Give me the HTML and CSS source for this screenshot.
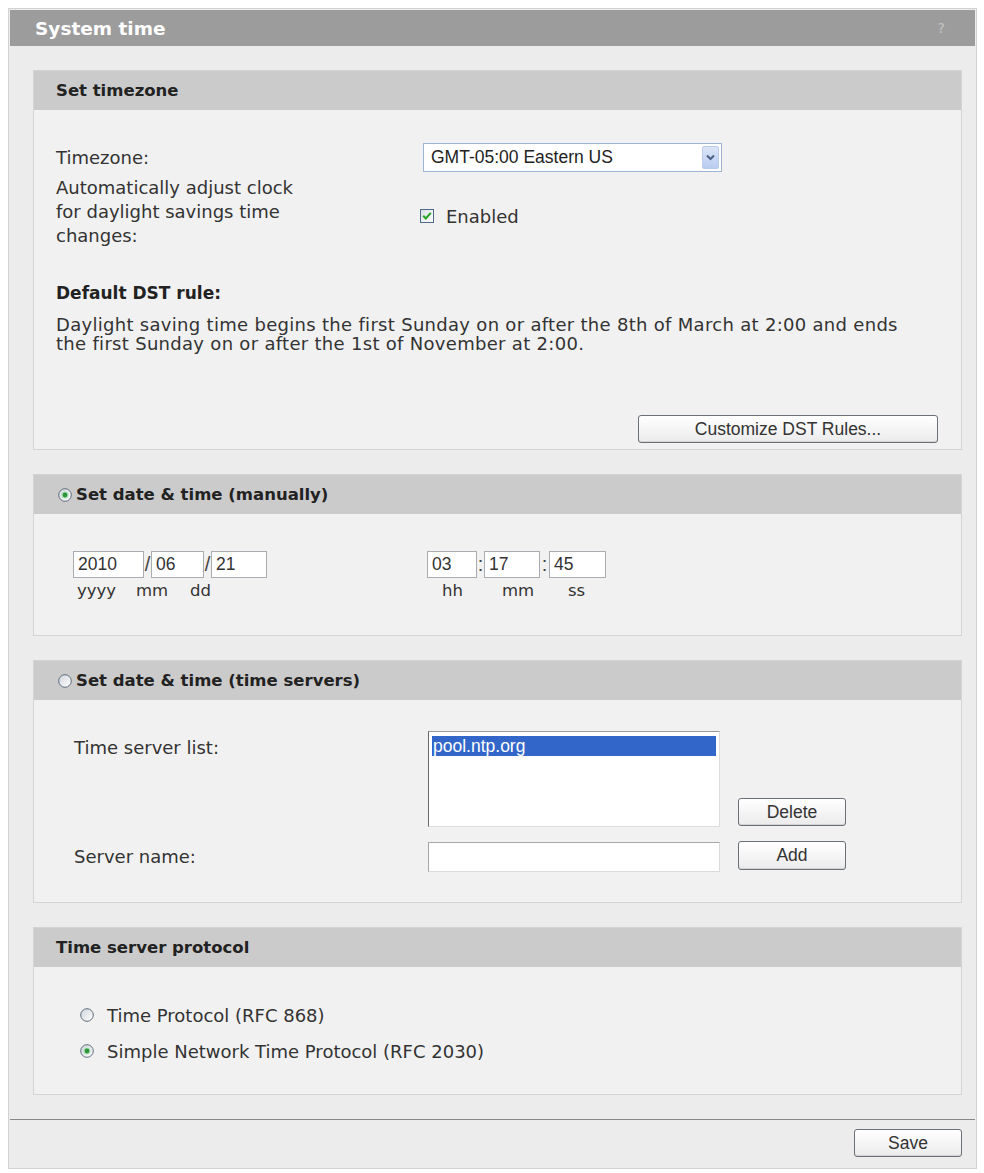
FILE: index.html
```html
<!DOCTYPE html>
<html>
<head>
<meta charset="utf-8">
<title>System time</title>
<link rel="stylesheet" href="styles.css">
</head>
<body>
<div class="panel">
  <div class="titlebar"><span class="title">System time</span><span class="help">?</span></div>
  <div class="content">

    <section class="sec">
      <div class="sec-head">Set timezone</div>
      <div class="sec-body tz-body">
        <div class="row">
          <div class="lbl">Timezone:</div>
          <div class="select">
            <span class="select-text">GMT-05:00 Eastern US</span>
            <span class="select-arrow"><svg width="9" height="7" viewBox="0 0 9 7"><polyline points="1,1.5 4.5,5 8,1.5" fill="none" stroke="#4d6185" stroke-width="2"/></svg></span>
          </div>
        </div>
        <div class="row row-dst">
          <div class="lbl">Automatically adjust clock<br>for daylight savings time<br>changes:</div>
          <div class="check">
            <svg class="checkbox" width="14" height="14" viewBox="0 0 14 14">
              <defs><linearGradient id="cbg" x1="0" y1="0" x2="1" y2="1"><stop offset="0" stop-color="#d9dee4"/><stop offset="1" stop-color="#ffffff"/></linearGradient></defs>
              <rect x="0.5" y="0.5" width="13" height="13" fill="url(#cbg)" stroke="#4f6a88"/>
              <polyline points="3.2,6.8 5.8,9.5 10.8,3.8" fill="none" stroke="#22a322" stroke-width="2"/>
            </svg>
            <span>Enabled</span>
          </div>
        </div>
        <div class="rule-title">Default DST rule:</div>
        <p class="rule-text">Daylight saving time begins the first Sunday on or after the 8th of March at 2:00 and ends<br>the first Sunday on or after the 1st of November at 2:00.</p>
        <div class="btn-row"><button class="btn btn-wide">Customize DST Rules...</button></div>
      </div>
    </section>

    <section class="sec">
      <div class="sec-head">
        <svg class="radio head-radio" width="14" height="14" viewBox="0 0 14 14">
          <defs><linearGradient id="rg1" x1="0" y1="0" x2="1" y2="1"><stop offset="0" stop-color="#cfd5dc"/><stop offset="1" stop-color="#ffffff"/></linearGradient></defs>
          <circle cx="7" cy="7" r="6.3" fill="url(#rg1)" stroke="#5f6d7b"/>
          <circle cx="7" cy="7" r="3.6" fill="#b3e0b9"/>
          <circle cx="7" cy="7" r="2.4" fill="#2c963b"/>
        </svg>
        <span>Set date &amp; time (manually)</span>
      </div>
      <div class="sec-body dt-body">
        <div class="dgroup">
          <div class="fields">
            <span class="f w71">2010</span><span class="sep">/</span><span class="f w53">06</span><span class="sep">/</span><span class="f w56">21</span>
          </div>
          <div class="labs">
            <span class="l-yyyy">yyyy</span><span class="l-mm">mm</span><span>dd</span>
          </div>
        </div>
        <div class="tgroup">
          <div class="fields">
            <span class="f w50">03</span><span class="sep">:</span><span class="f w56">17</span><span class="sep sep-s">:</span><span class="f w57">45</span>
          </div>
          <div class="labs">
            <span class="l-hh">hh</span><span class="l-tmm">mm</span><span>ss</span>
          </div>
        </div>
      </div>
    </section>

    <section class="sec">
      <div class="sec-head">
        <svg class="radio head-radio" width="14" height="14" viewBox="0 0 14 14">
          <defs><linearGradient id="rg2" x1="0" y1="0" x2="1" y2="1"><stop offset="0" stop-color="#cfd5dc"/><stop offset="1" stop-color="#ffffff"/></linearGradient></defs>
          <circle cx="7" cy="7" r="6.3" fill="url(#rg2)" stroke="#5f6d7b"/>
        </svg>
        <span>Set date &amp; time (time servers)</span>
      </div>
      <div class="sec-body ts-body">
        <div class="ts-row">
          <div class="ts-lbl ts-lbl-top">Time server list:</div>
          <div class="listbox"><div class="opt-sel">pool.ntp.org</div></div>
          <button class="btn btn-sm btn-del">Delete</button>
        </div>
        <div class="ts-row ts-row2">
          <div class="ts-lbl">Server name:</div>
          <span class="f textbox"></span>
          <button class="btn btn-sm btn-add">Add</button>
        </div>
      </div>
    </section>

    <section class="sec">
      <div class="sec-head">Time server protocol</div>
      <div class="sec-body proto-body">
        <div class="opt">
          <svg class="radio" width="14" height="14" viewBox="0 0 14 14">
            <defs><linearGradient id="rg3" x1="0" y1="0" x2="1" y2="1"><stop offset="0" stop-color="#cfd5dc"/><stop offset="1" stop-color="#ffffff"/></linearGradient></defs>
            <circle cx="7" cy="7" r="6.3" fill="url(#rg3)" stroke="#5f6d7b"/>
          </svg>
          <span>Time Protocol (RFC 868)</span>
        </div>
        <div class="opt">
          <svg class="radio" width="14" height="14" viewBox="0 0 14 14">
            <defs><linearGradient id="rg4" x1="0" y1="0" x2="1" y2="1"><stop offset="0" stop-color="#cfd5dc"/><stop offset="1" stop-color="#ffffff"/></linearGradient></defs>
            <circle cx="7" cy="7" r="6.3" fill="url(#rg4)" stroke="#5f6d7b"/>
            <circle cx="7" cy="7" r="3.6" fill="#b3e0b9"/>
            <circle cx="7" cy="7" r="2.4" fill="#2c963b"/>
          </svg>
          <span>Simple Network Time Protocol (RFC 2030)</span>
        </div>
      </div>
    </section>

  </div>
  <div class="footer"><button class="btn btn-sm">Save</button></div>
</div>
</body>
</html>
```

FILE: styles.css
```css
body {
  margin: 0;
  background: #ffffff;
  font-family: "DejaVu Sans", Verdana, sans-serif;
  color: #333333;
}

.panel {
  margin: 8px 0 0 8px;
  width: 969px;
  box-sizing: border-box;
  border: 1px solid #d2d2d2;
  padding: 1px;
  background: #ececec;
}

.titlebar {
  height: 36px;
  background: #9c9c9c;
  display: flex;
  align-items: center;
  justify-content: space-between;
  padding: 0 30px 0 25px;
  color: #ffffff;
}

.title {
  font-weight: bold;
  font-size: 18.5px;
}

.help {
  font-size: 14px;
  color: #c4c4c4;
}

.content {
  padding: 24px 13px 0 23px;
}

.sec {
  background: #f1f1f1;
  border: 1px solid #d4d4d4;
  margin-bottom: 24px;
}

.sec-head {
  height: 39px;
  background: #cbcbcb;
  display: flex;
  align-items: center;
  padding-left: 22px;
  font-weight: bold;
  font-size: 16.5px;
  color: #222222;
}

.head-radio {
  margin-left: 2px;
  margin-right: 4px;
}

.radio {
  display: block;
  flex: none;
}

/* Section 1 */
.tz-body {
  padding: 33px 23px 6px 22px;
}

.row {
  display: flex;
  align-items: center;
}

.row-dst {
  margin-top: 4px;
}

.lbl {
  width: 367px;
  font-size: 18px;
  line-height: 24px;
}

.select {
  width: 299px;
  height: 29px;
  box-sizing: border-box;
  border: 1px solid #9fb3d2;
  background: #ffffff;
  display: flex;
  align-items: center;
  justify-content: space-between;
  padding: 0 2px 0 7px;
}

.select-text {
  font-family: "Liberation Sans", Arial, sans-serif;
  font-size: 17.5px;
  color: #222222;
}

.select-arrow {
  width: 17px;
  height: 23px;
  box-sizing: border-box;
  border: 1px solid #bccbea;
  border-radius: 2px;
  background: linear-gradient(#dce6f9, #b9cbf0);
  display: flex;
  align-items: center;
  justify-content: center;
}

.check {
  display: flex;
  align-items: center;
  margin-top: 8px;
  margin-left: -3px;
  font-size: 18px;
}

.checkbox {
  display: block;
  margin-right: 12px;
}

.rule-title {
  margin-top: 33px;
  font-weight: bold;
  font-size: 17px;
  line-height: 24px;
  color: #222222;
}

.rule-text {
  margin: 10px 0 0;
  font-size: 18px;
  letter-spacing: 0.3px;
  line-height: 19px;
  white-space: nowrap;
}

.btn-row {
  display: flex;
  justify-content: flex-end;
  margin-top: 62px;
}

.btn {
  font-family: "Liberation Sans", Arial, sans-serif;
  font-size: 17.5px;
  color: #333333;
  background: linear-gradient(#ffffff, #ebebeb);
  border: 1px solid #6a7076;
  border-radius: 3px;
  box-shadow: inset 0 -1px 0 #d4d4d4;
  padding: 0;
  height: 28px;
}

.btn-wide {
  width: 300px;
}

.btn-sm {
  width: 108px;
}

/* Section 2 */
.dt-body {
  display: flex;
  padding: 37px 0 35px 39px;
}

.dgroup {
  width: 354px;
}

.fields {
  display: flex;
  align-items: center;
}

.f {
  display: block;
  height: 27px;
  box-sizing: border-box;
  border: 1px solid #a9adb2;
  background: #ffffff;
  font-family: "Liberation Sans", Arial, sans-serif;
  font-size: 17.5px;
  line-height: 25px;
  padding: 0 4px;
  color: #333333;
}

.w50 { width: 50px; }
.w53 { width: 53px; }
.w56 { width: 56px; }
.w57 { width: 57px; }
.w71 { width: 71px; }

.sep {
  width: 7px;
  text-align: center;
  font-family: "Liberation Sans", Arial, sans-serif;
  font-size: 20px;
  color: #444444;
}

.sep-s {
  width: 9px;
}

.labs {
  display: flex;
  margin-top: 4px;
  font-size: 16.5px;
  line-height: 18px;
}

.dgroup .labs {
  padding-left: 4px;
}

.l-yyyy { width: 59px; }
.l-mm { width: 54px; }

.tgroup .labs {
  padding-left: 15px;
}

.l-hh { width: 60px; }
.l-tmm { width: 66px; }

/* Section 3 */
.ts-body {
  padding: 31px 0 30px 40px;
}

.ts-row {
  display: flex;
}

.ts-row2 {
  margin-top: 15px;
  align-items: center;
}

.ts-lbl {
  width: 354px;
  font-size: 18px;
  line-height: 24px;
}

.ts-lbl-top {
  padding-top: 5px;
}

.listbox {
  width: 292px;
  height: 96px;
  box-sizing: border-box;
  background: #ffffff;
  border-style: solid;
  border-width: 1px;
  border-color: #9a9a9a #dcdcdc #dcdcdc #6a6a6a;
  padding: 4px 3px;
}

.opt-sel {
  height: 20px;
  background: #3266c8;
  color: #ffffff;
  font-family: "Liberation Sans", Arial, sans-serif;
  font-size: 17.5px;
  line-height: 20px;
  padding-left: 1px;
}

.btn-del {
  align-self: flex-end;
  margin-left: 18px;
  margin-bottom: 1px;
}

.textbox {
  width: 292px;
  height: 30px;
  border-color: #a6a6a6 #dadada #dadada #a6a6a6;
}

.btn-add {
  margin-left: 18px;
  height: 29px;
  margin-top: -4px;
}

/* Section 4 */
.proto-body {
  padding: 36px 0 31px 46px;
}

.opt {
  display: flex;
  align-items: center;
  height: 24px;
  font-size: 18px;
}

.opt + .opt {
  margin-top: 12px;
}

.opt .radio {
  margin-right: 13px;
}

/* Footer */
.footer {
  border-top: 1px solid #888888;
  display: flex;
  justify-content: flex-end;
  padding: 9px 13px 10px 0;
}
```
